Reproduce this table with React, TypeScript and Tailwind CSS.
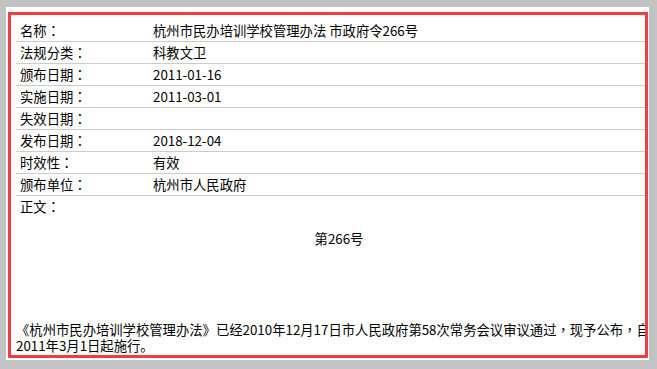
const rows = [
  { label: "名称：", value: "杭州市民办培训学校管理办法 市政府令266号" },
  { label: "法规分类：", value: "科教文卫" },
  { label: "颁布日期：", value: "2011-01-16" },
  { label: "实施日期：", value: "2011-03-01" },
  { label: "失效日期：", value: "" },
  { label: "发布日期：", value: "2018-12-04" },
  { label: "时效性：", value: "有效" },
  { label: "颁布单位：", value: "杭州市人民政府" },
];

// full-width colon/comma sit centred in the reference font, as in the TC cut
function Text({ children }: { children: string }) {
  return (
    <>
      {children.split(/([：，])/).map((part, i) =>
        part === "：" || part === "，" ? (
          <span key={i} className="font-['Noto_Sans_CJK_TC',sans-serif]">
            {part}
          </span>
        ) : (
          part
        )
      )}
    </>
  );
}

export default function App() {
  return (
    <div
      className="h-[369px] w-[657px] overflow-hidden bg-[#c3c3c3] pl-[6px] pt-[7px] text-[13.33px] text-black"
      style={{ fontFamily: '"Noto Sans CJK SC", "Noto Sans", sans-serif' }}
    >
      <div className="h-[353px] w-[643px] bg-white pb-[2px] pl-[2px] pr-[1px] pt-[5px]">
        <div className="h-[346px] w-[640px] overflow-hidden border-[3px] border-[#f63b3b]">
          <div className="w-[651px] pl-[5px] pt-[5px]">
            {rows.map((row) => (
              <div
                key={row.label}
                className="flex h-[22px] items-center border-b border-[#cccccc]"
              >
                <div className="w-[137px] shrink-0 pl-[4px]">
                  <Text>{row.label}</Text>
                </div>
                <div className="whitespace-nowrap">{row.value}</div>
              </div>
            ))}

            <div className="flex h-[22px] items-center pl-[4px]">
              <Text>正文：</Text>
            </div>

            <div className="mt-[10px] flex h-[22px] items-center justify-center">
              第266号
            </div>

            <p className="mt-[72px] leading-[16px]">
              <Text>
                《杭州市民办培训学校管理办法》已经2010年12月17日市人民政府第58次常务会议审议通过，现予公布，自2011年3月1日起施行。
              </Text>
            </p>
          </div>
        </div>
      </div>
    </div>
  );
}
